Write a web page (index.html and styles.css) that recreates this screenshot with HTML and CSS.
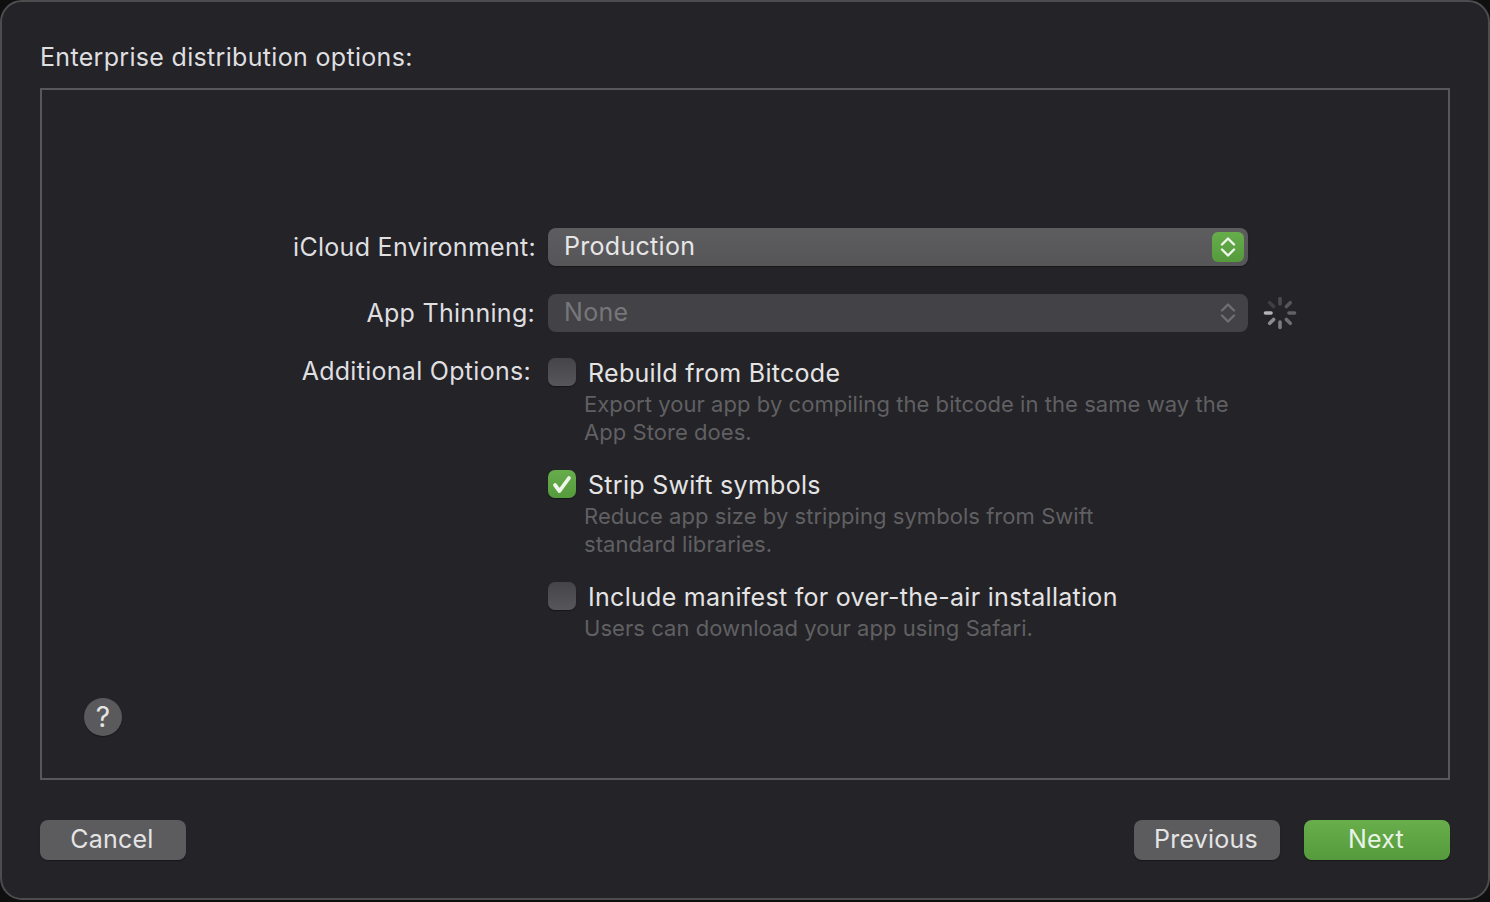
FILE: index.html
```html
<!DOCTYPE html>
<html lang="en">
<head>
<meta charset="utf-8">
<title>Enterprise distribution options</title>
<link rel="stylesheet" href="styles.css">
</head>
<body>
<div class="window">
  <h1 class="heading">Enterprise distribution options:</h1>
  <div class="panel">
    <div class="form">
      <div class="label label-icloud">iCloud Environment:</div>
      <div class="select select-active">
        <span class="select-text">Production</span>
        <span class="stepper stepper-active">
          <svg viewBox="0 0 16 22" width="16" height="22"><path d="M2 8.5 8 2.5 14 8.5M2 13.5 8 19.5 14 13.5" fill="none" stroke="currentColor" stroke-width="2.4" stroke-linecap="round" stroke-linejoin="round"/></svg>
        </span>
      </div>
      <div class="spacer"></div>

      <div class="label label-thin">App Thinning:</div>
      <div class="select select-disabled">
        <span class="select-text">None</span>
        <span class="stepper">
          <svg viewBox="0 0 16 22" width="16" height="22"><path d="M2 8.5 8 2.5 14 8.5M2 13.5 8 19.5 14 13.5" fill="none" stroke="currentColor" stroke-width="2.4" stroke-linecap="round" stroke-linejoin="round"/></svg>
        </span>
      </div>
      <svg class="spinner" viewBox="0 0 36 36" width="36" height="36">
        <g fill="none" stroke-width="3.6" stroke-linecap="round">
          <path d="M18 3.5V9" stroke="#4b4b4d"/>
          <path d="M28.3 7.7 24.4 11.6" stroke="#565658"/>
          <path d="M32.5 18H27" stroke="#636365"/>
          <path d="M28.3 28.3 24.4 24.4" stroke="#6f6f71"/>
          <path d="M18 32.5V27" stroke="#7c7c7e"/>
          <path d="M7.7 28.3 11.6 24.4" stroke="#8c8c8e"/>
          <path d="M3.5 18H9" stroke="#b4b4b6"/>
          <path d="M7.7 7.7 11.6 11.6" stroke="#404042"/>
        </g>
      </svg>

      <div class="label label-options">Additional Options:</div>
      <div class="options">
        <div class="option">
          <span class="check"></span>
          <span class="option-title">Rebuild from Bitcode</span>
          <p class="option-desc">Export your app by compiling the bitcode in the same way the<br>App Store does.</p>
        </div>
        <div class="option">
          <span class="check check-on">
            <svg viewBox="0 0 28 28" width="28" height="28"><path d="M7 15 11.5 21 21 8" fill="none" stroke="#eef5ea" stroke-width="3.8" stroke-linecap="round" stroke-linejoin="round"/></svg>
          </span>
          <span class="option-title">Strip Swift symbols</span>
          <p class="option-desc">Reduce app size by stripping symbols from Swift<br>standard libraries.</p>
        </div>
        <div class="option">
          <span class="check"></span>
          <span class="option-title">Include manifest for over-the-air installation</span>
          <p class="option-desc">Users can download your app using Safari.</p>
        </div>
      </div>
    </div>
    <div class="help">?</div>
  </div>
  <div class="footer">
    <button class="btn">Cancel</button>
    <div class="footer-right">
      <button class="btn">Previous</button>
      <button class="btn btn-primary">Next</button>
    </div>
  </div>
</div>
</body>
</html>
```
FILE: styles.css
```css
* { box-sizing: border-box; }
html, body { margin: 0; padding: 0; background: #0f0f10; }
body { width: 1490px; height: 902px; overflow: hidden; font-family: "Inter", "Liberation Sans", sans-serif; font-weight: 430; letter-spacing: 0.29px; }
.window {
  width: 1490px;
  height: 900px;
  background: #242327;
  border: 2px solid #4d4d4f;
  border-radius: 22px;
  padding: 0 38px;
  color: #e4e4e5;
}
.heading {
  margin: 0;
  height: 86px;
  padding-top: 38px;
  font-size: 25px;
  line-height: 34px;
  font-weight: 430;
  color: #dfdfe0;
  letter-spacing: 0.32px;
}
.panel {
  height: 692px;
  border: 2px solid #58585a;
  padding-top: 138px;
}
.form {
  display: grid;
  grid-template-columns: 506px 700px 60px;
  grid-template-rows: 38px 38px auto;
  row-gap: 28px;
}
.label { font-size: 25px; line-height: 38px; text-align: right; color: #dfdfe0; }
.label-icloud { padding-right: 12px; }
.label-thin { padding-right: 13px; }
.label-options { padding-right: 17px; line-height: 28px; margin-top: -3px; }
.select {
  display: flex;
  align-items: center;
  justify-content: space-between;
  border-radius: 8px;
  padding: 0 12px 0 16px;
  font-size: 25px;
}
.select-text { padding-bottom: 2px; }
.select-active { background: linear-gradient(#5d5c5f, #565558); color: #e6e6e7; box-shadow: 0 1px 1px #18181a; padding-right: 4px; }
.select-disabled { background: #434246; color: #77767a; }
.stepper { display: flex; color: #6f6e72; }
.stepper-active {
  width: 32px;
  height: 30px;
  align-items: center;
  justify-content: center;
  border-radius: 6px;
  background: linear-gradient(#68ad4c, #559a3c);
  color: #eef5ea;
}
.spacer { grid-column: 3; }
.spinner { margin: 1px 0 0 14px; }
.options { grid-column: 2; display: flex; flex-direction: column; row-gap: 24px; margin-top: -2px; }
.option {
  display: grid;
  grid-template-columns: 40px 1fr;
  row-gap: 4px;
}
.check {
  width: 28px;
  height: 28px;
  border-radius: 7px;
  background: linear-gradient(#454448, #57565a);
  box-shadow: 0 1px 1px #18181a;
}
.check-on { background: linear-gradient(#68ad4c, #559a3c); }
.check-on svg { display: block; }
.option-title { font-size: 25px; line-height: 26px; color: #e4e4e5; padding-top: 2px; }
.option-desc {
  grid-column: 1 / 3;
  margin: 0 0 0 36px;
  font-size: 22px;
  line-height: 28px;
  font-weight: 400;
  letter-spacing: 0.05px;
  color: #606063;
}
.help {
  width: 38px;
  height: 38px;
  margin: 56px 0 0 42px;
  border-radius: 50%;
  background: #5a595c;
  box-shadow: 0 1px 1px #18181a;
  color: #e4e4e5;
  font-size: 28px;
  font-weight: 400;
  line-height: 38px;
  text-align: center;
}
.footer {
  display: flex;
  justify-content: space-between;
  margin-top: 40px;
}
.footer-right { display: flex; gap: 24px; }
.btn {
  width: 146px;
  height: 40px;
  border: 0;
  border-radius: 8px;
  padding: 0 2px 2px 0;
  background: #5c5b5e;
  color: #e4e4e5;
  font-family: inherit;
  font-weight: 430;
  font-size: 25px;
  letter-spacing: 0.22px;
  box-shadow: 0 1px 1px #18181a;
}
.btn-primary { background: linear-gradient(#69ae4b, #559b3d); color: #e9f3e5; }
```
